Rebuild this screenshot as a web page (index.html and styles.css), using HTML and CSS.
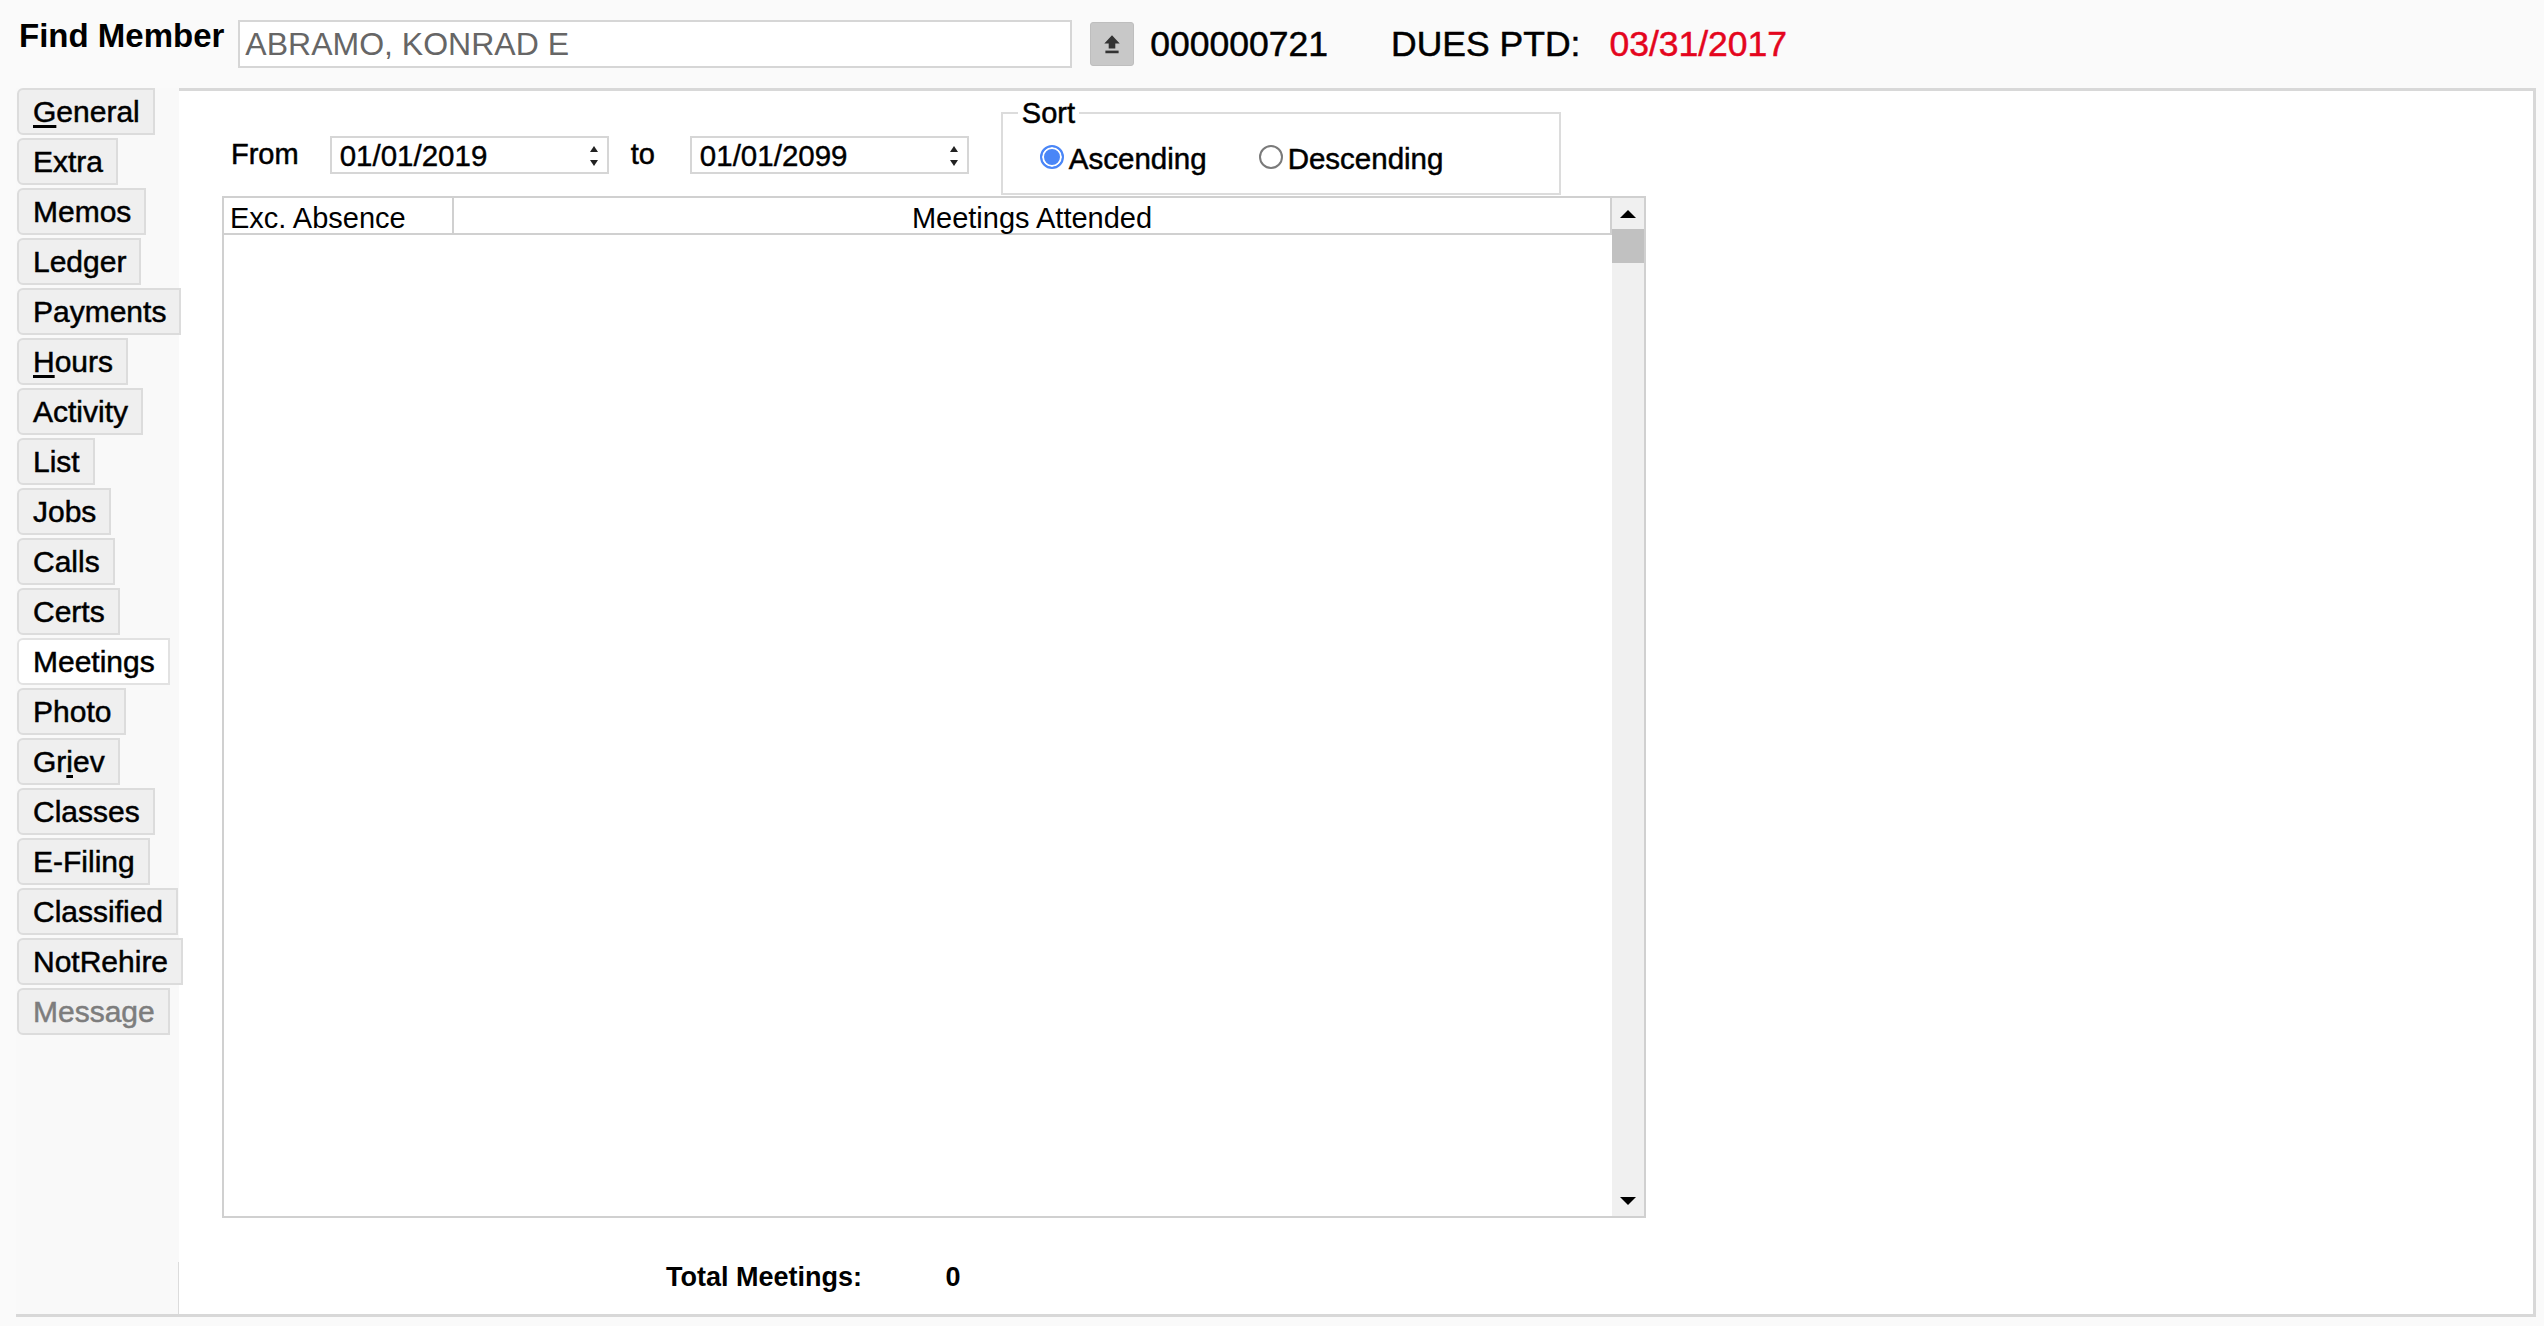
FILE: index.html
```html
<!DOCTYPE html>
<html lang="en">
<head>
  <meta charset="UTF-8">
  <title>Member - Meetings</title>
  <link rel="stylesheet" href="styles.css">
</head>
<body>
  <div class="topbar">
    <label class="find-label" for="find">Find Member</label>
    <input id="find" class="find-input" type="text" value="ABRAMO, KONRAD E">
    <button class="upload-btn" type="button">
      <svg viewBox="0 0 18 20" width="20" height="22">
        <polygon points="9,2 16,9.5 12,9.5 12,14 6,14 6,9.5 2,9.5" fill="#333"/>
        <rect x="3" y="16" width="12" height="2.4" fill="#333"/>
      </svg>
    </button>
    <span class="member-no">000000721</span>
    <span class="dues-label">DUES PTD:</span>
    <span class="dues-date">03/31/2017</span>
  </div>

  <div class="main">
    <nav class="tabs">
      <div class="tab"><u>G</u>eneral</div>
      <div class="tab">Extra</div>
      <div class="tab">Memos</div>
      <div class="tab">Ledger</div>
      <div class="tab">Payments</div>
      <div class="tab"><u>H</u>ours</div>
      <div class="tab">Activity</div>
      <div class="tab">List</div>
      <div class="tab">Jobs</div>
      <div class="tab">Calls</div>
      <div class="tab">Certs</div>
      <div class="tab active">Meetings</div>
      <div class="tab">Photo</div>
      <div class="tab">Gr<u>i</u>ev</div>
      <div class="tab">Classes</div>
      <div class="tab">E-Filing</div>
      <div class="tab">Classified</div>
      <div class="tab">NotRehire</div>
      <div class="tab disabled">Message</div>
    </nav>

    <section class="panel">
      <div class="filters">
        <span class="from-label">From</span>
        <div class="date-box date-from">
          <span>01/01/2019</span>
          <svg class="spin" viewBox="0 0 10 24" width="10" height="24">
            <polygon points="5,2 9,8 1,8" fill="#222"/>
            <polygon points="1,16 9,16 5,22" fill="#222"/>
          </svg>
        </div>
        <span class="to-label">to</span>
        <div class="date-box date-to">
          <span>01/01/2099</span>
          <svg class="spin" viewBox="0 0 10 24" width="10" height="24">
            <polygon points="5,2 9,8 1,8" fill="#222"/>
            <polygon points="1,16 9,16 5,22" fill="#222"/>
          </svg>
        </div>
        <fieldset class="sort">
          <legend>Sort</legend>
          <div class="radio-row">
            <label class="radio"><input type="radio" name="sort" checked>Ascending</label>
            <label class="radio"><input type="radio" name="sort">Descending</label>
          </div>
        </fieldset>
      </div>

      <div class="grid">
        <div class="grid-body">
          <div class="grid-head">
            <div class="col-exc">Exc. Absence</div>
            <div class="col-att">Meetings Attended</div>
          </div>
        </div>
        <div class="vscroll">
          <div class="scroll-btn">
            <svg viewBox="0 0 16 8" width="16" height="8"><polygon points="8,0 16,8 0,8" fill="#000"/></svg>
          </div>
          <div class="scroll-thumb"></div>
          <div class="scroll-track"></div>
          <div class="scroll-btn">
            <svg viewBox="0 0 16 8" width="16" height="8"><polygon points="0,0 16,0 8,8" fill="#000"/></svg>
          </div>
        </div>
      </div>

      <div class="totals">
        <span class="total-label">Total Meetings:</span>
        <span class="total-val">0</span>
      </div>
    </section>
  </div>
</body>
</html>
```

FILE: styles.css
```css
* {
  box-sizing: border-box;
}
html, body {
  margin: 0;
  padding: 0;
  height: 100%;
  background-color: #fafafa;
  font-family: "Liberation Sans", Arial, sans-serif;
  color: #000;
}

/* top bar */
.topbar {
  display: flex;
  align-items: center;
  height: 88px;
  padding-left: 19px;
}
.find-label {
  align-self: flex-start;
  margin-top: 17px;
  font-size: 33px;
  line-height: 38px;
  font-weight: bold;
}
.find-input {
  margin-left: 14px;
  width: 834px;
  height: 48px;
  padding: 0 5px;
  border: 2px solid #d6d6d6;
  background: #fff;
  font-family: inherit;
  font-size: 32px;
  color: #666;
  outline: none;
}
.upload-btn {
  margin-left: 18px;
  width: 44px;
  height: 44px;
  padding: 0;
  display: flex;
  align-items: center;
  justify-content: center;
  background: #c8c8c8;
  border: 1px solid #bebebe;
  border-radius: 3px;
}
.member-no, .dues-label, .dues-date {
  font-size: 35.5px;
  line-height: 40px;
  -webkit-text-stroke: 0.5px currentColor;
}
.member-no {
  margin-left: 16px;
}
.dues-label {
  margin-left: 63px;
}
.dues-date {
  margin-left: 29px;
  color: #e4051d;
}

/* main area */
.main {
  display: flex;
  height: 1229px;
  margin: 0 8px 0 16px;
  border-bottom: 3px solid #d8d8d8;
}
.tabs {
  position: relative;
  flex-shrink: 0;
  width: 163px;
  display: flex;
  flex-direction: column;
  align-items: flex-start;
  padding-left: 1px;
  background-color: #f9f9f9;
}
.tabs::after {
  content: '';
  position: absolute;
  right: 0;
  bottom: 0;
  width: 1px;
  height: 52px;
  background-color: #dcdcdc;
}
.tab {
  height: 47px;
  margin-bottom: 3px;
  padding: 0 13px 0 14px;
  border: 2px solid #dcdcdc;
  border-radius: 6px 0 0 6px;
  background-color: #efefef;
  font-size: 30px;
  line-height: 43px;
  white-space: nowrap;
  -webkit-text-stroke: 0.5px currentColor;
}
.tab u {
  text-underline-offset: 3px;
}
.tab.active {
  background-color: #fff;
  border-color: #e2e2e2;
}
.tab.disabled {
  color: #7d7d7d;
}

/* panel */
.panel {
  flex: 1;
  background-color: #fff;
  border-top: 3px solid #d8d8d8;
  border-right: 3px solid #d8d8d8;
  padding: 5px 0 0 43px;
}
.filters {
  display: flex;
  align-items: flex-start;
  padding-left: 9px;
  font-size: 29px;
}
.from-label, .to-label {
  margin-top: 41px;
  line-height: 34px;
  -webkit-text-stroke: 0.5px currentColor;
}
.date-box {
  margin-top: 40px;
  width: 279px;
  height: 38px;
  display: flex;
  align-items: center;
  justify-content: space-between;
  padding: 2px 8px 0;
  border: 2px solid #d6d6d6;
  font-size: 29.5px;
  -webkit-text-stroke: 0.4px currentColor;
}
.date-from {
  margin-left: 31px;
}
.to-label {
  margin-left: 22px;
}
.date-to {
  margin-left: 35px;
}
.sort {
  margin: 0 0 0 32px;
  width: 560px;
  height: 99px;
  padding: 0 15px;
  border: 2px solid #dcdcdc;
}
.sort legend {
  padding: 0 4px;
  font-size: 29px;
  line-height: 34px;
  -webkit-text-stroke: 0.5px currentColor;
}
.radio-row {
  display: flex;
  margin-top: 12px;
  padding-left: 22px;
}
.radio {
  display: inline-flex;
  align-items: center;
  font-size: 29.5px;
  line-height: 34px;
  -webkit-text-stroke: 0.5px currentColor;
}
.radio + .radio {
  margin-left: 52px;
}
.radio input {
  appearance: none;
  margin: 0 5px 4px 0;
  width: 24px;
  height: 24px;
  border-radius: 50%;
  border: 2px solid #7a7a7a;
  background: #fff;
}
.radio input:checked {
  border-color: #4a86f7;
  background: #4a86f7;
  box-shadow: inset 0 0 0 2px #fff;
}

/* meetings grid */
.grid {
  display: flex;
  margin-top: 1px;
  width: 1424px;
  height: 1022px;
  border: 2px solid #d0d0d0;
}
.grid-body {
  flex: 1;
}
.grid-head {
  display: flex;
  height: 37px;
  border-bottom: 2px solid #d0d0d0;
  border-right: 2px solid #d0d0d0;
  font-size: 29px;
  line-height: 35px;
}
.col-exc {
  width: 230px;
  padding: 3px 0 0 6px;
  border-right: 2px solid #d0d0d0;
}
.col-att {
  flex: 1;
  padding-top: 3px;
  text-align: center;
}
.vscroll {
  width: 32px;
  display: flex;
  flex-direction: column;
  background-color: #f0f0f0;
}
.scroll-btn {
  height: 31px;
  display: flex;
  align-items: center;
  justify-content: center;
}
.scroll-thumb {
  height: 34px;
  background-color: #c1c1c1;
}
.scroll-track {
  flex: 1;
}

/* totals */
.totals {
  margin: 42px 0 0 444px;
  font-size: 27px;
  line-height: 34px;
  font-weight: bold;
}
.total-val {
  margin-left: 76px;
}
```
